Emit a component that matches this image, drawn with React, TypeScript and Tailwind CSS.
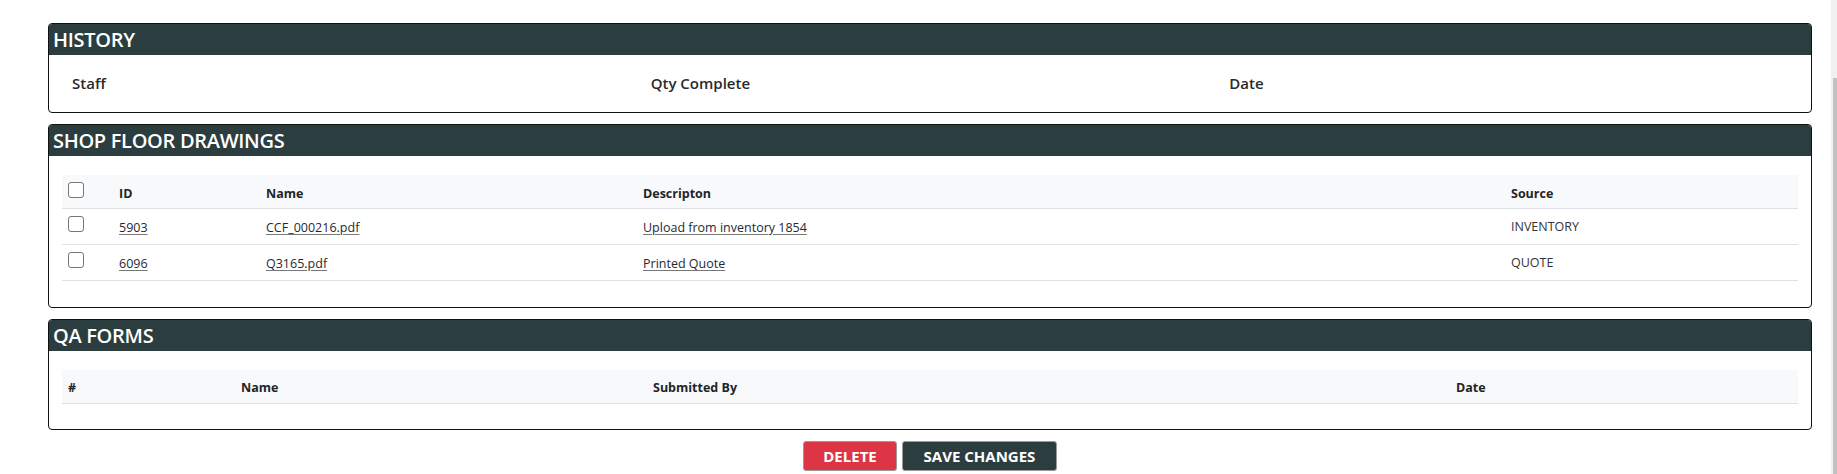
import React from "react";

const Box = () => (
  <span className="block w-[16px] h-[16px] rounded-[3px] border border-[#767676] bg-white" />
);

function Card({ title, children }: { title: string; children: React.ReactNode }) {
  return (
    <div className="w-[1764px] border border-[#111] rounded-[4px] overflow-hidden bg-white">
      <div className="h-[31px] bg-[#2c3d40] pl-[4px] flex items-center">
        <span className="text-white text-[20px] font-semibold leading-none tracking-[-0.3px]">{title}</span>
      </div>
      {children}
    </div>
  );
}

export default function App() {
  const drawings = [
    { id: "5903", name: "CCF_000216.pdf", desc: "Upload from inventory 1854", src: "INVENTORY" },
    { id: "6096", name: "Q3165.pdf", desc: "Printed Quote", src: "QUOTE" },
  ];
  const dGrid = "grid grid-cols-[51px_147px_377px_868px_293px]";
  const qGrid = "grid grid-cols-[173px_412px_803px_348px]";
  return (
    <div className="h-[474px] w-[1837px] overflow-hidden flex bg-white font-['Open_Sans','Noto_Sans',sans-serif] text-[#212529]">
      <div className="w-[1831px] pl-[48px] pt-[23px] flex flex-col gap-[11px]">
        <Card title="HISTORY">
          <div className="px-[13px] py-[13px]">
            <div className="grid grid-cols-3 h-[31px] items-center text-[15px] font-semibold text-[#2a2a2a]">
              <div className="pl-[10px]">Staff</div>
              <div className="pl-[10px]">Qty Complete</div>
              <div className="pl-[10px]">Date</div>
            </div>
          </div>
        </Card>

        <Card title="SHOP FLOOR DRAWINGS">
          <div className="px-[13px] pt-[19px] pb-[26px] text-[12.5px]">
            <div className={`${dGrid} h-[34px] bg-[#f8f9fa] border-b border-[#dee2e6] font-bold`}>
              <div className="pl-[6px] pt-[7px]"><Box /></div>
              <div className="pl-[6px] pt-[10px]">ID</div>
              <div className="pl-[6px] pt-[10px]">Name</div>
              <div className="pl-[6px] pt-[10px]">Descripton</div>
              <div className="pl-[6px] pt-[10px]">Source</div>
            </div>
            {drawings.map((d) => (
              <div key={d.id} className={`${dGrid} h-[36px] border-b border-[#dee2e6]`}>
                <div className="pl-[6px] pt-[7px]"><Box /></div>
                <div className="pl-[6px] pt-[10px]"><span className="underline decoration-[#777] underline-offset-[2px] text-[#1f2a37]">{d.id}</span></div>
                <div className="pl-[6px] pt-[10px]"><span className="underline decoration-[#777] underline-offset-[2px] text-[#1f2a37]">{d.name}</span></div>
                <div className="pl-[6px] pt-[10px]"><span className="underline decoration-[#777] underline-offset-[2px] text-[#1f2a37]">{d.desc}</span></div>
                <div className="pl-[6px] pt-[9px] text-[#333]">{d.src}</div>
              </div>
            ))}
          </div>
        </Card>

        <Card title="QA FORMS">
          <div className="px-[13px] pt-[19px] pb-[25px] text-[12.5px]">
            <div className={`${qGrid} h-[34px] bg-[#f8f9fa] border-b border-[#dee2e6] font-bold`}>
              <div className="pl-[6px] pt-[9px]">#</div>
              <div className="pl-[6px] pt-[9px]">Name</div>
              <div className="pl-[6px] pt-[9px]">Submitted By</div>
              <div className="pl-[6px] pt-[9px]">Date</div>
            </div>
          </div>
        </Card>

        <div className="w-[1764px] flex justify-center gap-[5px]">
          <button className="w-[94px] h-[30px] rounded-[3px] border border-[#9a9a9a] bg-[#dc3545] text-white text-[15px] font-bold">DELETE</button>
          <button className="w-[155px] h-[30px] rounded-[3px] border border-[#9a9a9a] bg-[#2c3d40] text-white text-[15px] font-bold">SAVE CHANGES</button>
        </div>
      </div>
      <div className="w-[6px] h-full bg-[#f1f1f1] pl-[2px]">
        <div className="mt-[78px] h-[400px] bg-[#c1c1c1]" />
      </div>
    </div>
  );
}
